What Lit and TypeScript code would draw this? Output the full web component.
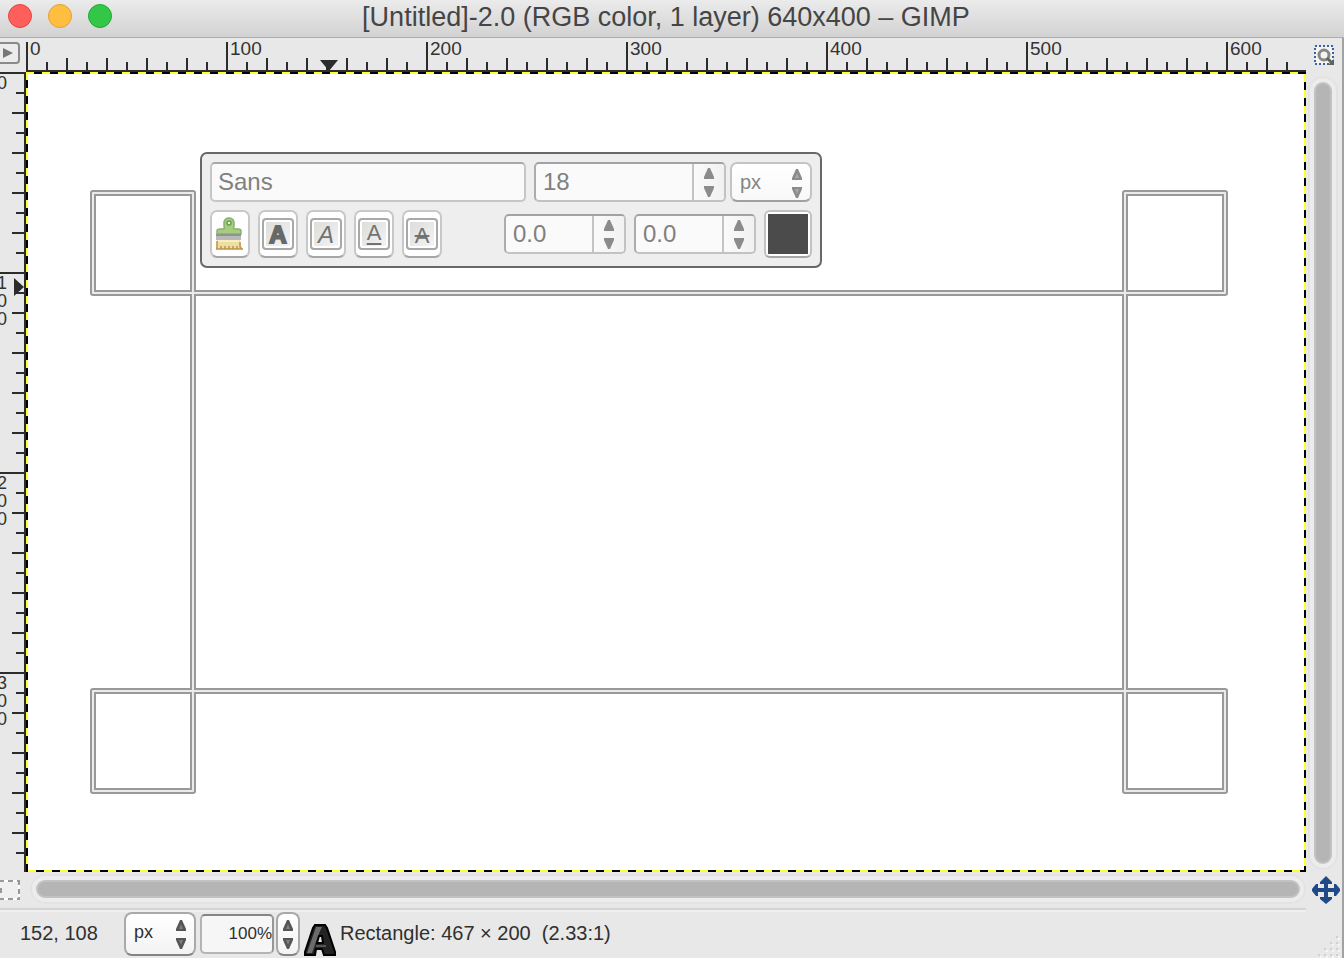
import { LitElement, html, svg, css } from "lit";
import { customElement, property } from "lit/decorators.js";

const TICKS = Array.from({ length: 64 }, (_, i) => i);

@customElement("arrow-pair")
class ArrowPair extends LitElement {
  static styles = css`
    :host { display: flex; flex-direction: column; justify-content: center; gap: 7px; pointer-events: none; }
    svg { display: block; width: 12px; height: 11px; fill: currentColor; }
  `;
  render() {
    return html`
      <svg viewBox="0 0 12 11"><path d="M5 0h2l4 9v2H1V9z" /><path d="M6 4l2 5H4z" fill="#fff" opacity=".25" /></svg>
      <svg viewBox="0 0 12 11"><path d="M1 0h10v2L7 11H5L1 2z" /><path d="M4 2h4L6 7z" fill="#fff" opacity=".25" /></svg>
    `;
  }
}

@customElement("spin-field")
class SpinField extends LitElement {
  @property() label = "";
  @property() value = "";
  static styles = css`
    :host { display: flex; box-sizing: border-box; height: 40px; border: 2px solid #c2c2c2; border-top-color: #a2a2a2; border-left-color: #acacac; border-radius: 5px; background: #fafafa; overflow: hidden; }
    input { flex: 1; min-width: 0; border: 0; outline: 0; margin: 0; padding: 0 0 0 7px; background: transparent; color: #808080; font: 24px/36px "Liberation Sans", Arial, sans-serif; }
    .steps { display: flex; flex-direction: column; width: 32px; box-sizing: border-box; border-left: 2px solid #c4c4c4; background: linear-gradient(90deg, #fafafa, #f1f1f1); }
    button { flex: 1; display: flex; justify-content: center; align-items: center; border: 0; padding: 0; background: transparent; }
    svg { display: block; width: 12px; height: 11px; fill: #8b8b8b; }
  `;
  render() {
    return html`
      <input type="text" aria-label=${this.label} .value=${this.value} />
      <div class="steps">
        <button aria-label="Increase"><svg viewBox="0 0 12 11"><path d="M5 0h2l4 9v2H1V9z" /></svg></button>
        <button aria-label="Decrease"><svg viewBox="0 0 12 11"><path d="M1 0h10v2L7 11H5L1 2z" /></svg></button>
      </div>
    `;
  }
}

@customElement("text-toolbar")
class TextToolbar extends LitElement {
  static styles = css`
    :host { display: flex; flex-direction: column; gap: 8px; box-sizing: border-box; width: 622px; padding: 8px; border: 2px solid #686868; border-radius: 7px; background: #eee; font-family: "Liberation Sans", Arial, sans-serif; }
    .row { display: flex; align-items: center; }
    .family { box-sizing: border-box; flex: 1; min-width: 0; height: 40px; margin: 0 8px 0 0; padding: 0 6px; border: 2px solid #c6c6c6; border-top-color: #a8a8a8; border-radius: 5px; outline: 0; background: #fafafa; color: #808080; font: 24px/36px "Liberation Sans", Arial, sans-serif; }
    .size { width: 192px; margin-right: 4px; }
    .unit { position: relative; width: 82px; height: 40px; }
    .unit select { appearance: none; box-sizing: border-box; width: 82px; height: 40px; margin: 0; padding: 0 8px; border: 2px solid #c4c4c4; border-bottom-color: #a0a0a0; border-radius: 7px; background: linear-gradient(#fff, #f8f8f8); color: #858585; font: 20px/36px "Liberation Sans", Arial, sans-serif; }
    .unit arrow-pair { position: absolute; right: 9px; top: 0; height: 42px; color: #8b8b8b; }
    .tools { height: 48px; }
    .tool { display: flex; align-items: center; justify-content: center; box-sizing: border-box; width: 40px; height: 48px; margin: 0 8px 0 0; padding: 0; border: 2px solid #c8c8c8; border-bottom-color: #a6a6a6; border-radius: 7px; background: #fefefe; color: #707372; font: 24px/28px "Liberation Sans", Arial, sans-serif; }
    .face { box-sizing: border-box; width: 32px; height: 32px; flex: none; border: 2px solid #a8a8a8; border-radius: 4px; box-shadow: inset 0 0 0 2px #fff; background: linear-gradient(135deg, #dadcd9, #f5f5f5); text-align: center; line-height: 30px; }
    .bold { font-weight: 700; -webkit-text-stroke: 2px #666968; color: #666968; }
    .italic { font-style: italic; }
    .under { text-decoration: underline; text-decoration-thickness: 2px; text-underline-offset: 3px; font-size: 22px; line-height: 26px; }
    .strike { text-decoration: line-through; text-decoration-thickness: 2px; font-size: 22px; line-height: 32px; }
    .grow { flex: 1; }
    .num { width: 122px; margin-right: 8px; }
    .swatch { box-sizing: border-box; width: 48px; height: 48px; padding: 2px; border: 2px solid #c2c2c2; border-bottom-color: #a6a6a6; border-radius: 6px; background: #fff; }
    .chip { display: block; height: 40px; background: #4b4b4b; }
  `;
  render() {
    return html`
      <div class="row">
        <input class="family" type="text" aria-label="Font" .value=${"Sans"} />
        <spin-field class="size" label="Font size" value="18"></spin-field>
        <div class="unit">
          <select aria-label="Font size unit"><option>px</option></select>
          <arrow-pair></arrow-pair>
        </div>
      </div>
      <div class="row tools">
        <button class="tool" aria-label="Clear style">
          <svg width="30" height="36" viewBox="0 0 30 36">
            <path d="M2 18v-3q0-2 3-2h3q2 0 1-3V6q1-4 5-4t5 4v4q-1 3 1 3h3q3 0 3 2v3z" fill="#a6cc82" stroke="#86b268" stroke-width="1.500" />
            <circle cx="14" cy="7" r="2" fill="#f4fbe9" stroke="#6e9a50" stroke-width="1.500" />
            <path d="M1 18h25v6H1z" fill="#b9bab7" /><path d="M1 18h25v2H1z" fill="#92958f" />
            <path d="M2 24h23l2 9H1z" fill="#efdf9e" />
            <path d="M3 24h21v2H3z" fill="#f8eec4" />
            <path d="M1 33h27M2 25v8M6 30v3m4-3v3m4-3v3m4-3v3m4-3v3M25 26v5l2 2" stroke="#bd9450" stroke-width="1.500" fill="none" />
          </svg>
        </button>
        <button class="tool" aria-label="Bold"><span class="face bold">A</span></button>
        <button class="tool" aria-label="Italic"><span class="face italic">A</span></button>
        <button class="tool" aria-label="Underline"><span class="face under">A</span></button>
        <button class="tool" aria-label="Strikethrough"><span class="face strike">A</span></button>
        <span class="grow"></span>
        <spin-field class="num" label="Baseline" value="0.0"></spin-field>
        <spin-field class="num" label="Kerning" value="0.0"></spin-field>
        <button class="swatch" aria-label="Text color"><span class="chip"></span></button>
      </div>
    `;
  }
}

@customElement("app-root")
class AppRoot extends LitElement {
  static styles = css`
    :host { display: flex; flex-direction: column; height: 100vh; overflow: hidden; background: #e8e8e8; color: #303030; font-family: "Liberation Sans", Arial, sans-serif; }
    .title { flex: none; box-sizing: border-box; height: 38px; border-bottom: 1px solid #adadad; background: linear-gradient(#ebebeb, #d2d2d2); display: grid; grid-template-columns: 112px 1fr 124px; align-items: center; }
    .lights { display: flex; gap: 16px; padding: 0 0 5px 8px; }
    .light { box-sizing: border-box; width: 24px; height: 24px; padding: 0; border-radius: 50%; border: 1px solid; }
    .close { background: #ff5f5a; border-color: #e2463f; }
    .mini { background: #ffbe3f; border-color: #e0a135; }
    .zoom { background: #33c748; border-color: #24a732; }
    h1 { margin: 0; padding-bottom: 4px; text-align: center; font-size: 27px; line-height: 30px; font-weight: 400; color: #454545; white-space: nowrap; }
    .work { flex: 1; min-height: 0; display: grid; grid-template-columns: 26px minmax(0, 1fr) 36px; grid-template-rows: 34px minmax(0, 1fr) 36px; box-sizing: border-box; border-right: 2px solid #a2a2a2; }
    .corner { display: flex; align-items: flex-start; justify-content: flex-end; padding: 4px 6px 0 0; overflow: hidden; }
    .menu { flex: none; box-sizing: border-box; width: 24px; height: 22px; padding: 0; border: 2px solid #8a8a8a; border-radius: 4px; background: #ececec; display: flex; align-items: center; justify-content: center; }
    .ruler { display: block; width: 100%; height: 100%; overflow: hidden; fill: #2c2c2c; }
    .num { font-size: 19px; fill: #333; }
    .vnum { font-size: 18px; fill: #333; }
    .canvas { position: relative; background: #fff; overflow: hidden; }
    .art { display: block; width: 100%; height: 100%; }
    .float { position: absolute; left: 174px; top: 80px; }
    .side { display: flex; align-items: center; justify-content: center; }
    .vbar { box-sizing: border-box; margin: 4px 4px 2px 2px; padding: 4px; border: 2px solid #e3e3e3; border-radius: 15px; background: #ececec; }
    .hbar { box-sizing: border-box; margin: 2px 0 4px 4px; padding: 4px; border: 2px solid #e3e3e3; border-radius: 15px; background: #ececec; }
    .thumb { box-sizing: border-box; width: 100%; height: 100%; border: 2px solid #c2c2c2; border-radius: 9px; background: #b5b5b5; }
    .icon { border: 0; padding: 0; background: none; display: block; }
    .icon svg { display: block; }
    .mask { display: flex; align-items: flex-start; padding-top: 8px; }
    .nav { display: flex; align-items: flex-start; padding: 4px 0 0 5px; }
    .status { position: relative; flex: none; display: flex; box-sizing: border-box; height: 50px; padding: 2px 0 0 20px; border-right: 2px solid #a2a2a2; font-size: 20px; line-height: 24px; align-items: center; }
    .rule { position: absolute; left: 0; right: 36px; top: 0; height: 2px; background: #d4d4d4; border-bottom: 2px solid #f0f0f0; }
    .coords { width: 104px; padding-bottom: 2px; }
    .unit { position: relative; width: 72px; height: 44px; margin-right: 4px; }
    .unit select { appearance: none; box-sizing: border-box; width: 72px; height: 44px; margin: 0; padding: 0 8px 4px 8px; border: 2px solid #a9a9a9; border-bottom-color: #848484; border-radius: 8px; background: linear-gradient(#fff, #f3f3f3); color: #303030; font: 18px/36px "Liberation Sans", Arial, sans-serif; }
    .unit arrow-pair { position: absolute; right: 9px; top: 0; height: 44px; color: #555; }
    .pct { box-sizing: border-box; width: 74px; height: 40px; margin: 0 2px 0 0; padding: 0; border: 2px solid #b4b4b4; border-top-color: #858585; border-right-color: #979797; border-radius: 5px; outline: 0; background: #f6f6f6; color: #303030; text-align: right; font: 17px/34px "Liberation Sans", Arial, sans-serif; }
    .steps { box-sizing: border-box; width: 24px; height: 44px; padding: 0; margin-right: 4px; border: 2px solid #a9a9a9; border-bottom-color: #848484; border-radius: 8px; background: linear-gradient(#fff, #f3f3f3); color: #555; display: flex; justify-content: center; align-items: center; }
    .tool { align-self: flex-end; flex: none; margin: 0 4px 2px 0; }
    .info { white-space: pre; padding-bottom: 2px; }
    .grip { position: absolute; right: 0; bottom: 0; }
  `;

  private ticksH() {
    return TICKS.map((i) => {
      const h = i % 10 === 0 ? 28 : i % 2 === 0 ? 12 : 8;
      return svg`<rect x=${i * 20} y=${32 - h} width="2" height=${h} />`;
    });
  }

  private ticksV() {
    return TICKS.slice(0, 40).map((i) => {
      const w = i % 10 === 0 ? 24 : i % 2 === 0 ? 12 : 8;
      return svg`<rect x=${24 - w} y=${i * 20} width=${w} height="2" />`;
    });
  }

  render() {
    return html`
      <header class="title">
        <div class="lights">
          <button class="light close" aria-label="Close"></button>
          <button class="light mini" aria-label="Minimize"></button>
          <button class="light zoom" aria-label="Zoom"></button>
        </div>
        <h1>[Untitled]-2.0 (RGB color, 1 layer) 640x400 – GIMP</h1>
      </header>
      <main class="work">
        <div class="corner">
          <button class="menu" aria-label="Image menu">
            <svg width="12" height="12" viewBox="0 0 12 12"><path d="M1 1l10 5L1 11z" fill="#777" /></svg>
          </button>
        </div>
        <svg class="ruler">
          <rect y="32" width="100%" height="2" />
          ${this.ticksH()}
          ${[0, 1, 2, 3, 4, 5, 6].map((n) => svg`<text class="num" x=${n * 200 + 4} y="17">${n * 100}</text>`)}
          <path d="M294 22h18l-9 11z" />
        </svg>
        <div class="side">
          <button class="icon" aria-label="Zoom image when window size changes">
            <svg width="24" height="24" viewBox="0 0 24 24">
              <rect x="3" y="3" width="18" height="18" fill="#f3f3f3" stroke="#3c62a4" stroke-width="2" stroke-dasharray="2 2" />
              <circle cx="12" cy="12" r="5" fill="#f4f4f2" stroke="#858883" stroke-width="3" />
              <path d="M15 15l5 5" stroke="#62655f" stroke-width="3" /><path d="M22 16v6h-6z" fill="#62655f" />
            </svg>
          </button>
        </div>
        <svg class="ruler">
          <rect x="24" width="2" height="100%" />
          ${this.ticksV()}
          ${[0, 1, 2, 3].map((n) => String(n * 100).split("").map((d, k) =>
            svg`<text class="vnum" x="-3" y=${n * 200 + 17 + k * 18}>${d}</text>`))}
          <path d="M14 206v18l10-9z" />
        </svg>
        <div class="canvas">
          <svg class="art">
            <g fill="none" stroke-linejoin="round">
              ${[["#999", 6], ["#ebebeb", 2]].map(([c, w]) => svg`
                <path stroke=${c} stroke-width=${w} d="M67 121h100v100H67zM1099 121h100v100h-100zM67 619h100v100H67zM1099 619h100v100h-100zM167 221h932v398H167z" />`)}
            </g>
            <g stroke-width="4">
              <line x1="0" y1="0" x2="100%" y2="0" stroke="#ffff32" />
              <line x1="0" y1="0" x2="100%" y2="0" stroke="#000" stroke-dasharray="8" stroke-dashoffset="8" />
              <line x1="0" y1="0" x2="0" y2="100%" stroke="#ffff32" />
              <line x1="0" y1="0" x2="0" y2="100%" stroke="#000" stroke-dasharray="8" stroke-dashoffset="8" />
              <line x1="100%" y1="2" x2="100%" y2="100%" stroke="#ffff32" />
              <line x1="100%" y1="2" x2="100%" y2="100%" stroke="#000" stroke-dasharray="8" stroke-dashoffset="8" />
              <line x1="2" y1="100%" x2="100%" y2="100%" stroke="#ffff32" />
              <line x1="2" y1="100%" x2="100%" y2="100%" stroke="#000" stroke-dasharray="8" stroke-dashoffset="8" />
            </g>
          </svg>
          <text-toolbar class="float"></text-toolbar>
        </div>
        <div class="vbar"><div class="thumb"></div></div>
        <div class="mask">
          <button class="icon" aria-label="Toggle quick mask">
            <svg width="20" height="20" viewBox="0 0 20 20">
              <path d="M0 1h19v18H0" fill="#f0f0f0" stroke="#fff" stroke-width="2" />
              <path d="M0 1h4m4 0h5m4 0h3M19 1v4m0 4v5m0 3v3M0 19h4m4 0h5m4 0h3M1 8v5" fill="none" stroke="#999" stroke-width="2" />
            </svg>
          </button>
        </div>
        <div class="hbar"><div class="thumb"></div></div>
        <div class="nav">
          <button class="icon" aria-label="Navigate the image display">
            <svg width="30" height="28" viewBox="0 0 30 28">
              <path d="M15 0l6 6v2h-4v4h6V8h2l4 5v2l-4 5h-2v-4h-6v5h4v2l-6 5-6-5v-2h4v-5H7v4H5l-4-5v-2l4-5h2v4h6V8H9V6z" fill="#204a87" />
            </svg>
          </button>
        </div>
      </main>
      <footer class="status">
        <div class="rule"></div>
        <span class="coords">152, 108</span>
        <div class="unit">
          <select aria-label="Unit"><option>px</option></select>
          <arrow-pair></arrow-pair>
        </div>
        <input class="pct" type="text" aria-label="Zoom" .value=${"100%"} />
        <button class="steps" aria-label="Zoom steps"><arrow-pair></arrow-pair></button>
        <svg class="tool" width="32" height="32" viewBox="0 0 32 32">
          <path d="M11 1h10l2 3 8 24v3H20l-2-6h-6l-1 6H1v-3l8-24z" fill="#232323" stroke="#000" stroke-width="2" />
          <path d="M12 3h6l-2 4L8 29H3z" fill="#6b6b6b" />
          <path d="M15 12h3l1 7h-6z" fill="#e8e8e8" stroke="#000" stroke-width="2" />
          <path d="M12 22h10" stroke="#555" stroke-width="2" />
        </svg>
        <span class="info">Rectangle: 467 × 200  (2.33:1)</span>
        <svg class="grip" width="24" height="24" viewBox="0 0 24 24" fill="#d0d0d0">
          ${[[18, 2], [12, 8], [18, 8], [6, 14], [12, 14], [18, 14], [0, 20], [6, 20], [12, 20], [18, 20]].map(
            ([x, y]) => svg`<rect x=${x} y=${y} width="2" height="2" /><rect x=${x + 2} y=${y + 2} width="2" height="2" fill="#f6f6f6" />`)}
        </svg>
      </footer>
    `;
  }
}
